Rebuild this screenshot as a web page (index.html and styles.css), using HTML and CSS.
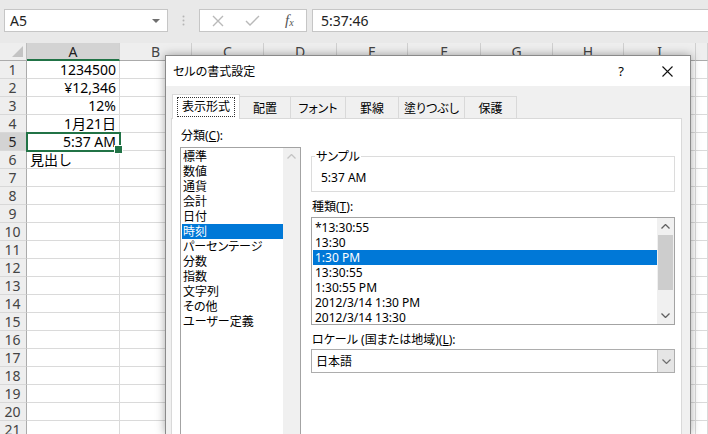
FILE: index.html
```html
<!DOCTYPE html>
<html lang="ja">
<head>
<meta charset="utf-8">
<title>セルの書式設定</title>
<link rel="stylesheet" href="styles.css">
</head>
<body>
<div class="fbar">
  <div class="namebox"><span>A5</span><span class="nb-arrow"></span></div>
  <div class="grip"><svg width="3" height="11" viewBox="0 0 3 11"><circle cx="1.5" cy="1.5" r="1"/><circle cx="1.5" cy="5.5" r="1"/><circle cx="1.5" cy="9.5" r="1"/></svg></div>
  <div class="fbtns">
    <div class="fb"><svg width="12" height="12" viewBox="0 0 12 12"><path d="M1 1L11 11M11 1L1 11"/></svg></div>
    <div class="fb"><svg width="15" height="11" viewBox="0 0 15 11"><path d="M1 6L5 10L14 1"/></svg></div>
    <div class="fb fx">f<span>x</span></div>
  </div>
  <div class="finput">5:37:46</div>
</div>

<div class="sheet">
  <div class="corner"><svg width="11" height="11" viewBox="0 0 11 11"><polygon points="11,0 11,11 0,11"/></svg></div>
  <div class="ch sel">A</div><div class="ch">B</div><div class="ch">C</div><div class="ch">D</div><div class="ch">E</div><div class="ch">F</div><div class="ch">G</div><div class="ch">H</div><div class="ch">I</div><div class="ch"></div>

  <div class="rh">1</div><div class="c r">1234500</div><div class="c"></div><div class="c"></div><div class="c"></div><div class="c"></div><div class="c"></div><div class="c"></div><div class="c"></div><div class="c"></div><div class="c"></div>
  <div class="rh">2</div><div class="c r">¥12,346</div><div class="c"></div><div class="c"></div><div class="c"></div><div class="c"></div><div class="c"></div><div class="c"></div><div class="c"></div><div class="c"></div><div class="c"></div>
  <div class="rh">3</div><div class="c r">12%</div><div class="c"></div><div class="c"></div><div class="c"></div><div class="c"></div><div class="c"></div><div class="c"></div><div class="c"></div><div class="c"></div><div class="c"></div>
  <div class="rh">4</div><div class="c r">1月21日</div><div class="c"></div><div class="c"></div><div class="c"></div><div class="c"></div><div class="c"></div><div class="c"></div><div class="c"></div><div class="c"></div><div class="c"></div>
  <div class="rh sel">5</div><div class="c r active">5:37 AM</div><div class="c"></div><div class="c"></div><div class="c"></div><div class="c"></div><div class="c"></div><div class="c"></div><div class="c"></div><div class="c"></div><div class="c"></div>
  <div class="rh">6</div><div class="c">見出し</div><div class="c"></div><div class="c"></div><div class="c"></div><div class="c"></div><div class="c"></div><div class="c"></div><div class="c"></div><div class="c"></div><div class="c"></div>
  <div class="rh">7</div><div class="c"></div><div class="c"></div><div class="c"></div><div class="c"></div><div class="c"></div><div class="c"></div><div class="c"></div><div class="c"></div><div class="c"></div><div class="c"></div>
  <div class="rh">8</div><div class="c"></div><div class="c"></div><div class="c"></div><div class="c"></div><div class="c"></div><div class="c"></div><div class="c"></div><div class="c"></div><div class="c"></div><div class="c"></div>
  <div class="rh">9</div><div class="c"></div><div class="c"></div><div class="c"></div><div class="c"></div><div class="c"></div><div class="c"></div><div class="c"></div><div class="c"></div><div class="c"></div><div class="c"></div>
  <div class="rh">10</div><div class="c"></div><div class="c"></div><div class="c"></div><div class="c"></div><div class="c"></div><div class="c"></div><div class="c"></div><div class="c"></div><div class="c"></div><div class="c"></div>
  <div class="rh">11</div><div class="c"></div><div class="c"></div><div class="c"></div><div class="c"></div><div class="c"></div><div class="c"></div><div class="c"></div><div class="c"></div><div class="c"></div><div class="c"></div>
  <div class="rh">12</div><div class="c"></div><div class="c"></div><div class="c"></div><div class="c"></div><div class="c"></div><div class="c"></div><div class="c"></div><div class="c"></div><div class="c"></div><div class="c"></div>
  <div class="rh">13</div><div class="c"></div><div class="c"></div><div class="c"></div><div class="c"></div><div class="c"></div><div class="c"></div><div class="c"></div><div class="c"></div><div class="c"></div><div class="c"></div>
  <div class="rh">14</div><div class="c"></div><div class="c"></div><div class="c"></div><div class="c"></div><div class="c"></div><div class="c"></div><div class="c"></div><div class="c"></div><div class="c"></div><div class="c"></div>
  <div class="rh">15</div><div class="c"></div><div class="c"></div><div class="c"></div><div class="c"></div><div class="c"></div><div class="c"></div><div class="c"></div><div class="c"></div><div class="c"></div><div class="c"></div>
  <div class="rh">16</div><div class="c"></div><div class="c"></div><div class="c"></div><div class="c"></div><div class="c"></div><div class="c"></div><div class="c"></div><div class="c"></div><div class="c"></div><div class="c"></div>
  <div class="rh">17</div><div class="c"></div><div class="c"></div><div class="c"></div><div class="c"></div><div class="c"></div><div class="c"></div><div class="c"></div><div class="c"></div><div class="c"></div><div class="c"></div>
  <div class="rh">18</div><div class="c"></div><div class="c"></div><div class="c"></div><div class="c"></div><div class="c"></div><div class="c"></div><div class="c"></div><div class="c"></div><div class="c"></div><div class="c"></div>
  <div class="rh">19</div><div class="c"></div><div class="c"></div><div class="c"></div><div class="c"></div><div class="c"></div><div class="c"></div><div class="c"></div><div class="c"></div><div class="c"></div><div class="c"></div>
  <div class="rh">20</div><div class="c"></div><div class="c"></div><div class="c"></div><div class="c"></div><div class="c"></div><div class="c"></div><div class="c"></div><div class="c"></div><div class="c"></div><div class="c"></div>
  <div class="rh">21</div><div class="c"></div><div class="c"></div><div class="c"></div><div class="c"></div><div class="c"></div><div class="c"></div><div class="c"></div><div class="c"></div><div class="c"></div><div class="c"></div>
</div>

<div class="dialog">
  <div class="titlebar">
    <div class="title">セルの書式設定</div>
    <div class="tbtn help">?</div>
    <div class="tbtn"><svg width="11" height="11" viewBox="0 0 11 11"><path d="M0.5 0.5L10.5 10.5M10.5 0.5L0.5 10.5"/></svg></div>
  </div>
  <div class="dbody">
    <div class="tabs">
      <div class="tab active"><span class="focus">表示形式</span></div>
      <div class="tab t-haichi">配置</div>
      <div class="tab t-font">フォント</div>
      <div class="tab t-keisen">罫線</div>
      <div class="tab t-nuri">塗りつぶし</div>
      <div class="tab t-hogo">保護</div>
    </div>
    <div class="panel">
      <div class="lcol">
        <div class="lbl">分類(<u>C</u>):</div>
        <div class="list cat">
          <div class="items">
            <div class="item">標準</div>
            <div class="item">数値</div>
            <div class="item">通貨</div>
            <div class="item">会計</div>
            <div class="item">日付</div>
            <div class="item sel">時刻</div>
            <div class="item">パーセンテージ</div>
            <div class="item">分数</div>
            <div class="item">指数</div>
            <div class="item">文字列</div>
            <div class="item">その他</div>
            <div class="item">ユーザー定義</div>
          </div>
          <div class="vscroll">
            <div class="sbtn dis"><svg width="9" height="5" viewBox="0 0 9 5"><path d="M0.5 4.5L4.5 0.5L8.5 4.5"/></svg></div>
          </div>
        </div>
      </div>
      <div class="rcol">
        <div class="group">
          <div class="glabel">サンプル</div>
          <div class="gval">5:37 AM</div>
        </div>
        <div class="lbl gap7">種類(<u>T</u>):</div>
        <div class="list types">
          <div class="items">
            <div class="item">*13:30:55</div>
            <div class="item">13:30</div>
            <div class="item sel">1:30 PM</div>
            <div class="item">13:30:55</div>
            <div class="item">1:30:55 PM</div>
            <div class="item">2012/3/14 1:30 PM</div>
            <div class="item">2012/3/14 13:30</div>
          </div>
          <div class="vscroll">
            <div class="sbtn"><svg width="9" height="5" viewBox="0 0 9 5"><path d="M0.5 4.5L4.5 0.5L8.5 4.5"/></svg></div>
            <div class="thumb"></div>
            <div class="strack"></div>
            <div class="sbtn"><svg width="9" height="5" viewBox="0 0 9 5"><path d="M0.5 0.5L4.5 4.5L8.5 0.5"/></svg></div>
          </div>
        </div>
        <div class="lbl gap7">ロケール (国または地域)(<u>L</u>):</div>
        <div class="combo">
          <span class="cval">日本語</span>
          <div class="cbtn"><svg width="9" height="5" viewBox="0 0 9 5"><path d="M0.5 0.5L4.5 4.5L8.5 0.5"/></svg></div>
        </div>
      </div>
    </div>
  </div>
</div>
</body>
</html>
```

FILE: styles.css
```css
* { box-sizing: border-box; margin: 0; padding: 0; }
html, body { width: 708px; height: 434px; overflow: hidden; }
body {
  position: relative;
  background: #e9e9e9;
  font-family: "Noto Sans", "Noto Sans CJK JP", sans-serif;
  color: #000;
}

/* formula bar */
.fbar { height: 43px; display: flex; align-items: flex-start; padding-top: 9px; background: #e9e9e9; }
.namebox {
  margin-left: 4px; width: 164px; height: 23px; background: #fff; border: 1px solid #c6c6c6;
  display: flex; align-items: center; justify-content: space-between; padding: 0 7px 0 5px;
  font-size: 14px; color: #222;
}
.nb-arrow { width: 0; height: 0; border-left: 4px solid transparent; border-right: 4px solid transparent; border-top: 4px solid #6f6f6f; }
.grip { width: 31px; height: 23px; display: flex; align-items: center; justify-content: center; }
.grip svg { fill: #b5b5b5; }
.fbtns { width: 108px; height: 23px; background: #fff; border: 1px solid #c6c6c6; display: flex; align-items: center; }
.fb { width: 36px; height: 21px; display: flex; align-items: center; justify-content: center; }
.fb svg { fill: none; stroke: #b9b9b9; stroke-width: 1.4; }
.fx { font-family: "Liberation Serif", serif; font-style: italic; font-size: 15px; color: #555; line-height: 21px; padding-left: 2px; }
.fx span { font-size: 10px; position: relative; top: 2px; }
.finput {
  flex: 1; margin-left: 5px; height: 23px; background: #fff; border: 1px solid #c6c6c6; border-right: none;
  padding-left: 8px; font-size: 14px; line-height: 21px; color: #222;
}

/* sheet */
.sheet {
  display: grid;
  grid-template-columns: 27px 93px 72px 72px 73px 71px 73px 72px 71px 72px 12px;
  grid-auto-rows: 18px;
  height: 391px;
  overflow: hidden;
  font-size: 14px;
}
.corner, .ch, .rh { background: #eeeeee; color: #444; display: flex; align-items: center; justify-content: center; }
.corner { justify-content: flex-end; align-items: flex-end; padding: 0 3px 3px 0; border-right: 1px solid #bdbdbd; border-bottom: 1px solid #ababab; }
.corner svg { fill: #c3c3c3; }
.ch { border-right: 1px solid #d0d0d0; border-bottom: 1px solid #ababab; }
.ch.sel { background: #d3d3d3; border-bottom: 2px solid #217346; color: #222; }
.rh { border-right: 1px solid #ababab; border-bottom: 1px solid #d8d8d8; padding-right: 1px; }
.rh.sel { background: #d3d3d3; color: #222; }
.c {
  background: #fff; border-right: 1px solid #dadada; border-bottom: 1px solid #dadada;
  display: flex; align-items: center; padding: 0 3px; white-space: nowrap; line-height: 17px;
}
.c.r { justify-content: flex-end; }
.c.active { position: relative; z-index: 1; outline: 2px solid #217346; outline-offset: -1px; }
.c.active::after {
  content: ""; position: absolute; right: -4px; bottom: -4px; width: 7px; height: 7px;
  background: #217346; border: 1px solid #fff;
}

/* dialog */
.dialog {
  position: absolute; left: 165px; top: 55px; width: 526px; height: 379px;
  background: #f0f0f0; border: 1px solid #8a8a8a; border-bottom: none;
  box-shadow: 0 0 9px rgba(0, 0, 0, 0.35);
  font-size: 12px; z-index: 5;
  display: flex; flex-direction: column;
  font-feature-settings: "palt";
}
.titlebar { height: 30px; flex: none; background: #fff; display: flex; align-items: center; padding-left: 7px; }
.title { flex: 1; font-size: 12px; }
.tbtn { width: 46px; height: 30px; display: flex; align-items: center; justify-content: center; }
.tbtn svg { fill: none; stroke: #111; stroke-width: 1.1; }
.help { font-size: 13px; }
.dbody { flex: 1; min-height: 0; padding: 8px 8px 0 5px; display: flex; flex-direction: column; }

.tabs { display: flex; align-items: flex-end; height: 24px; flex: none; margin-left: 1px; position: relative; z-index: 1; }
.tab {
  height: 22px; border: 1px solid #d9d9d9; border-bottom: none; margin-left: -1px;
  display: flex; align-items: center; justify-content: center; background: #f0f0f0;
}
.tab.active {
  height: 25px; width: 68px; margin-left: 0; margin-bottom: -1px; background: #fff;
  align-items: flex-start; padding-top: 2px;
}
.focus { border: 1px dotted #333; height: 20px; line-height: 18px; padding: 0 4px; }
.t-haichi { width: 52px; }
.t-font { width: 56px; }
.t-keisen { width: 54px; }
.t-nuri { width: 67px; }
.t-hogo { width: 53px; }

.panel {
  flex: 1; min-height: 0; overflow: hidden;
  background: #fff; border: 1px solid #d9d9d9; border-bottom: none;
  display: flex; gap: 10px; padding: 9px 6px 0 8px;
}
.lbl { height: 15px; line-height: 15px; padding-left: 1px; white-space: nowrap; }
.lbl u { text-underline-offset: 1px; }
.gap7 { margin-top: 7px; }
.lcol { width: 121px; display: flex; flex-direction: column; }
.rcol { width: 364px; }

.list { display: flex; border: 1px solid #a3a3a3; background: #fff; }
.items { flex: 1; }
.item { height: 15px; line-height: 15px; padding-left: 1px; white-space: nowrap; }
.item.sel { background: #0078d7; color: #fff; }
.cat { margin-top: 4px; flex: 1; border-bottom: none; }
.cat .items { margin-left: 1px; padding-top: 1px; }
.types { margin-top: 3px; height: 108px; }
.types .items { margin-left: 1px; padding-top: 2px; }
.types .item { padding-left: 2px; }

.vscroll { width: 17px; background: #f0f0f0; display: flex; flex-direction: column; }
.sbtn { height: 17px; display: flex; align-items: center; justify-content: center; }
.sbtn svg { fill: none; stroke: #606060; stroke-width: 1.3; }
.sbtn.dis svg { stroke: #c4c4c4; }
.thumb { height: 55px; margin: 0 1px; background: #cdcdcd; }
.strack { flex: 1; }

.group { margin-top: 28px; height: 36px; border: 1px solid #dcdcdc; position: relative; padding: 13px 0 0 9px; }
.glabel { position: absolute; top: -8px; left: 3px; background: #fff; padding: 0 1px; line-height: 15px; }
.gval { line-height: 15px; }

.combo {
  margin-top: 2px; height: 24px; border: 1px solid #adadad; background: #fff;
  display: flex; align-items: center; justify-content: space-between;
}
.cval { padding-left: 4px; }
.cbtn {
  width: 17px; height: 22px; background: #e5e5e5; border-left: 1px solid #c4c4c4;
  display: flex; align-items: center; justify-content: center;
}
.cbtn svg { fill: none; stroke: #707070; stroke-width: 1.2; }
```
